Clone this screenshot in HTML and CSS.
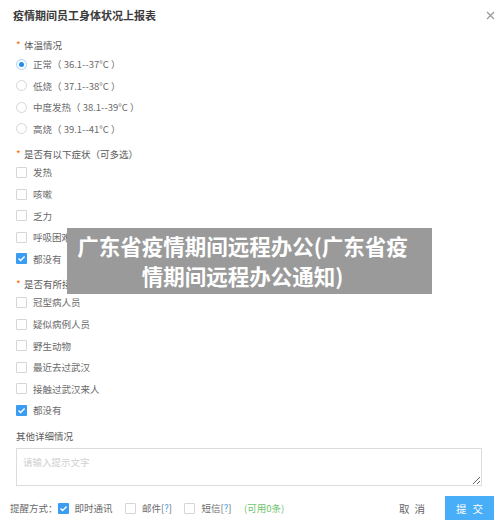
FILE: index.html
```html
<!DOCTYPE html>
<html lang="zh-CN">
<head>
<meta charset="utf-8">
<title>疫情期间员工身体状况上报表</title>
<link rel="stylesheet" href="styles.css">
</head>
<body>
<div class="dialog">
  <div class="header">
    <h1 class="title">疫情期间员工身体状况上报表</h1>
    <svg class="close" width="9" height="9" viewBox="0 0 9 9"><path d="M1 1L8 8M8 1L1 8" stroke="#9a9a9a" stroke-width="1.3" fill="none"/></svg>
  </div>
  <div class="form">
    <div class="group">
      <div class="label"><span class="req">*</span>体温情况</div>
      <div class="item"><span class="radio checked"></span><span>正常（ 36.1--37°C ）</span></div>
      <div class="item"><span class="radio"></span><span>低烧（ 37.1--38°C ）</span></div>
      <div class="item"><span class="radio"></span><span>中度发热（ 38.1--39°C ）</span></div>
      <div class="item"><span class="radio"></span><span>高烧（ 39.1--41°C ）</span></div>
    </div>
    <div class="group">
      <div class="label"><span class="req">*</span>是否有以下症状（可多选）</div>
      <div class="item"><span class="check"></span><span>发热</span></div>
      <div class="item"><span class="check"></span><span>咳嗽</span></div>
      <div class="item"><span class="check"></span><span>乏力</span></div>
      <div class="item"><span class="check"></span><span>呼吸困难</span></div>
      <div class="item"><span class="check checked"><svg width="11" height="11" viewBox="0 0 11 11"><path d="M2.5 5.6L4.6 7.6L8.6 3.4" stroke="#fff" stroke-width="1.4" fill="none"/></svg></span><span>都没有</span></div>
    </div>
    <div class="group">
      <div class="label"><span class="req">*</span>是否有所接触（可多选）</div>
      <div class="item"><span class="check"></span><span>冠型病人员</span></div>
      <div class="item"><span class="check"></span><span>疑似病例人员</span></div>
      <div class="item"><span class="check"></span><span>野生动物</span></div>
      <div class="item"><span class="check"></span><span>最近去过武汉</span></div>
      <div class="item"><span class="check"></span><span>接触过武汉来人</span></div>
      <div class="item"><span class="check checked"><svg width="11" height="11" viewBox="0 0 11 11"><path d="M2.5 5.6L4.6 7.6L8.6 3.4" stroke="#fff" stroke-width="1.4" fill="none"/></svg></span><span>都没有</span></div>
    </div>
    <div class="group other">
      <div class="label plain">其他详细情况</div>
      <textarea class="detail" placeholder="请输入提示文字"></textarea>
    </div>
  </div>
  <div class="footer">
    <div class="remind">
      <span class="remind-label">提醒方式：</span>
      <span class="opt"><span class="check checked"><svg width="11" height="11" viewBox="0 0 11 11"><path d="M2.5 5.6L4.6 7.6L8.6 3.4" stroke="#fff" stroke-width="1.4" fill="none"/></svg></span><span>即时通讯</span></span>
      <span class="opt"><span class="check"></span><span>邮件[<span class="q">?</span>]</span></span>
      <span class="opt"><span class="check"></span><span>短信[<span class="q">?</span>]</span></span>
      <span class="avail">(可用0条)</span>
    </div>
    <div class="actions">
      <span class="cancel">取消</span>
      <span class="submit">提交</span>
    </div>
  </div>
  <div class="banner">广东省疫情期间远程办公(广东省疫<br>情期间远程办公通知)</div>
</div>
</body>
</html>
```
FILE: styles.css
```css
html, body {
  margin: 0;
  padding: 0;
  background: #fff;
}
body {
  width: 500px;
  height: 524px;
  overflow: hidden;
  font-family: "Noto Sans CJK SC", "Noto Sans", sans-serif;
  color: #6a6a6a;
}
.dialog {
  position: relative;
  width: 500px;
  height: 524px;
  display: flex;
  flex-direction: column;
}
.header {
  height: 30px;
  display: flex;
  align-items: center;
  justify-content: space-between;
  padding: 0 5px 0 13px;
}
.title {
  margin: 0;
  font-size: 11px;
  font-weight: bold;
  color: #3a3a3a;
  line-height: 16px;
}
.close {
  display: block;
}
.form {
  padding: 7.3px 0 0 16px;
  display: flex;
  flex-direction: column;
  gap: 6px;
}
.group {
  display: flex;
  flex-direction: column;
}
.label {
  height: 16px;
  line-height: 16px;
  font-size: 9.5px;
  color: #5a5a5a;
  display: flex;
  align-items: center;
}
.req {
  color: #ff6a00;
  width: 8px;
  font-size: 10px;
}
.item {
  height: 21.6px;
  display: flex;
  align-items: center;
  gap: 6px;
  font-size: 9.5px;
  color: #6a6a6a;
  white-space: nowrap;
}
.radio {
  width: 11px;
  height: 11px;
  box-sizing: border-box;
  border: 1px solid #d6d6d6;
  border-radius: 50%;
  display: flex;
  align-items: center;
  justify-content: center;
  flex: none;
}
.radio.checked {
  border-color: #a9d2f7;
}
.radio.checked::after {
  content: "";
  width: 5px;
  height: 5px;
  border-radius: 50%;
  background: #1e8ff0;
}
.check {
  width: 11px;
  height: 11px;
  box-sizing: border-box;
  border: 1px solid #d6d6d6;
  border-radius: 1px;
  flex: none;
  display: flex;
}
.check.checked {
  border: none;
  background: #3a9df2;
}
.check svg {
  display: block;
}
.other {
  gap: 4.6px;
  padding-top: 0.4px;
}
.plain {
  color: #5a5a5a;
}
.detail {
  width: 466px;
  height: 38px;
  box-sizing: border-box;
  border: 1px solid #dcdcdc;
  border-radius: 0;
  margin: 0;
  padding: 6px 6px;
  font-family: "Noto Sans CJK SC", sans-serif;
  font-size: 9.5px;
  color: #666;
  outline: none;
  resize: both;
}
.detail::placeholder {
  color: #cfcfcf;
}
.footer {
  margin-top: 10px;
  height: 24px;
  display: flex;
  align-items: center;
  justify-content: space-between;
  padding: 0 6px 0 10px;
}
.remind {
  display: flex;
  align-items: center;
  font-size: 9.5px;
  color: #6a6a6a;
}
.remind-label {
  margin-right: 0;
}
.opt {
  display: flex;
  align-items: center;
  gap: 6px;
  margin-right: 12.5px;
}
.q {
  color: #3a9df2;
}
.avail {
  color: #6cc56b;
}
.actions {
  display: flex;
  align-items: center;
  gap: 15px;
}
.cancel {
  font-size: 10.5px;
  letter-spacing: 5px;
  color: #666;
}
.submit {
  width: 49px;
  height: 24px;
  box-sizing: border-box;
  padding-left: 6px;
  background: #48aef7;
  color: #fff;
  font-size: 10.5px;
  letter-spacing: 6px;
  display: flex;
  align-items: center;
  justify-content: center;
}
.banner {
  position: absolute;
  left: 67px;
  top: 228px;
  width: 365px;
  height: 66px;
  box-sizing: border-box;
  padding: 3px 14px 0 0;
  background: #9a9a9a;
  color: #fff;
  font-size: 21.5px;
  font-weight: bold;
  line-height: 30px;
  text-align: center;
  white-space: nowrap;
}
```
